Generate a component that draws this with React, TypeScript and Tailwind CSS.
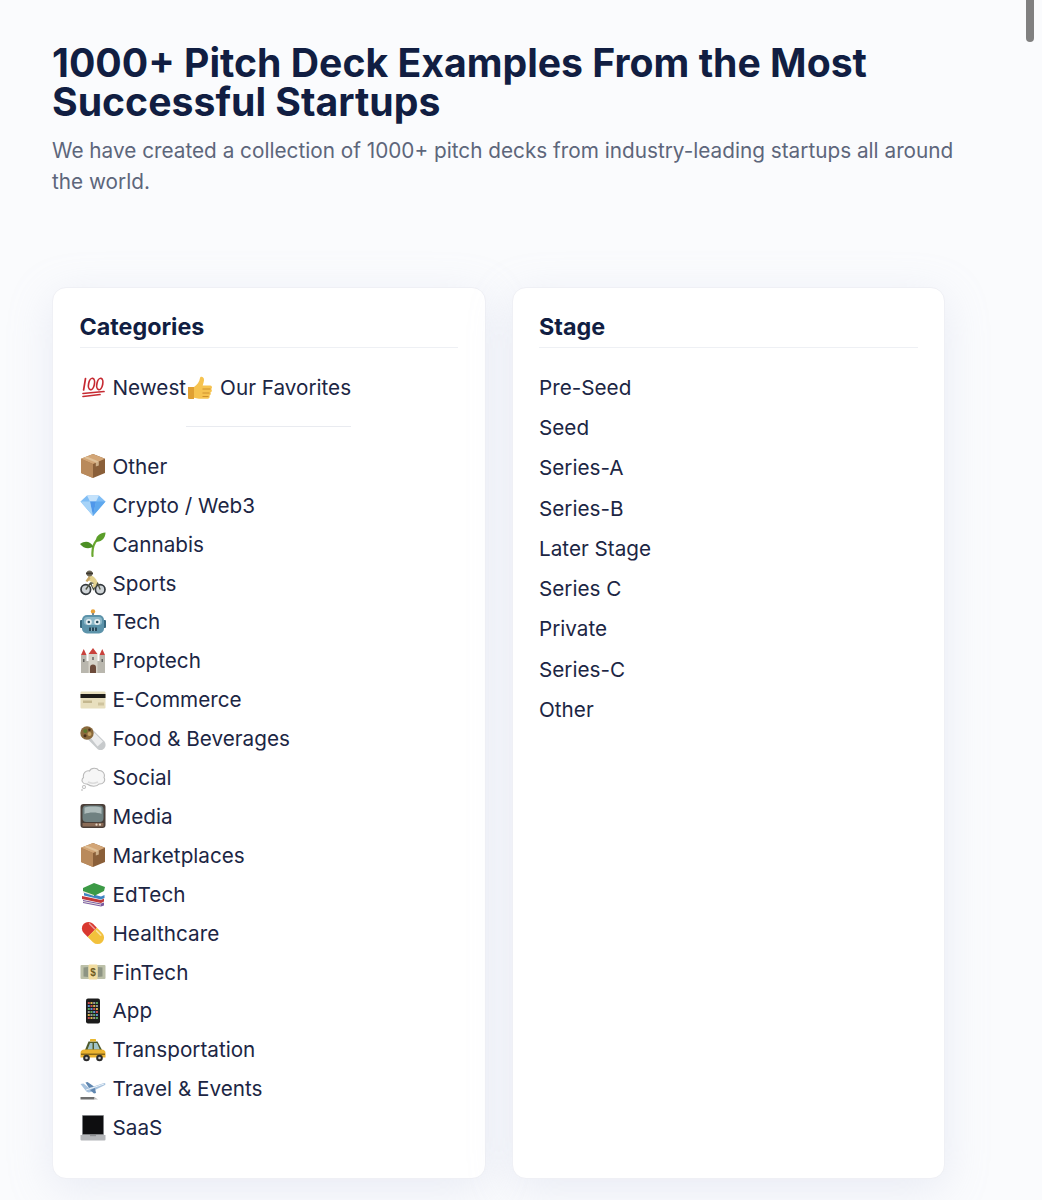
import React from "react";

const S = ({ children }: { children: React.ReactNode }) => (
  <svg viewBox="0 0 26 26" className="w-[26px] h-[26px] shrink-0">{children}</svg>
);

const Hundred = () => (
  <S>
    <g fill="none" stroke="#c62a32" strokeWidth="1.700" strokeLinecap="round">
      <path d="M5.500 3.500 3.600 15" />
      <ellipse cx="11.500" cy="9" rx="2.900" ry="5.800" transform="rotate(12 11.500 9)" />
      <ellipse cx="19.800" cy="9" rx="2.900" ry="5.800" transform="rotate(12 19.800 9)" />
      <path d="M3 18.500 Q13 17.500 24 16.500" />
      <path d="M3 21.500 Q12 20.500 20 19.500" />
    </g>
  </S>
);
const Thumb = () => (
  <S>
    <path d="M1 12h6v12H2a1 1 0 0 1-1-1z" fill="#e0a033" />
    <path d="M7 12c3-2 5.500-5 6-9 .3-2.300 4.500-1.500 4 2.500-.2 1.800-.8 3.500-1.300 5h7.300a2 2 0 0 1 1.200 3.600 2 2 0 0 1-.8 3.400 2 2 0 0 1-1 3.200 2 2 0 0 1-1.700 3H12c-2 0-3.500-1-5-1z" fill="#f6c350" />
    <path d="M15.500 14h8M15.500 18h7M15.500 21.500h6" stroke="#c98a2b" strokeWidth=".9" />
  </S>
);
const Box = () => (
  <S>
    <path d="M13 1 1 5.800V20l12 5z" fill="#a97a4d" />
    <path d="M13 1l12 4.800V20l-12 5z" fill="#8a5f39" />
    <path d="M1 5.800 13 1l12 4.800L13 11z" fill="#d3a677" />
    <path d="M13 11v14L1 20V5.800z" fill="#b98a5c" />
    <path d="M6.800 3.500 18.800 8.500v4l-3 1v-4L4 4.800z" fill="#e4c9a3" opacity=".75" />
  </S>
);
const Gem = () => (
  <S>
    <path d="M.5 9.500 7 3.500h12l6.500 6L13 24z" fill="#7fbdf5" />
    <path d="M7 3.500h12l-3 6H10z" fill="#c4e2fb" />
    <path d="M10 9.500h6L13 24z" fill="#4f97ea" />
    <path d="M.5 9.500H10L13 24z" fill="#a6d3f8" />
    <path d="M16 9.500h9.500L13 24z" fill="#5ea8ee" />
  </S>
);
const Sprout = () => (
  <S>
    <path d="M12.500 25C12 18 13 13 17 9" fill="none" stroke="#6aa82f" strokeWidth="2.200" strokeLinecap="round" />
    <path d="M15.500 10.500C16 4.500 20 2 25.500 1.500c0 5.500-4 10-10 9z" fill="#5b9e2a" />
    <path d="M13.500 15.500C10 10 5 9.500 0 13c3.500 4.500 9 5.500 13.500 2.500z" fill="#4c8f24" />
  </S>
);
const Biker = () => (
  <S>
    <circle cx="5.800" cy="19.500" r="4.800" fill="#cfd4d7" stroke="#33383d" strokeWidth="1.700" />
    <circle cx="20.200" cy="19.500" r="4.800" fill="#cfd4d7" stroke="#33383d" strokeWidth="1.700" />
    <path d="M5.800 19.500 10.500 13h7l2.700 6.500M10.500 13l3 6.500 4-6.500" fill="none" stroke="#4f5340" strokeWidth="1.300" />
    <path d="M9 4.500c3.500.8 7 3.500 8.500 7.500l-2.500 5.500-2.500-.8 1.200-3.800L7.500 10z" fill="#e3d28f" />
    <path d="M9 6l-3.500 5 2 1 3-3.500z" fill="#c9a865" />
    <circle cx="9.500" cy="3.500" r="3" fill="#6f6a5a" />
    <path d="M6 2.500h7v1.800H6z" fill="#3f3a30" />
  </S>
);
const Robot = () => (
  <S>
    <circle cx="13" cy="2.500" r="2.200" fill="#e8a33a" />
    <path d="M12 4h2v3h-2z" fill="#7c8a92" />
    <rect x="0" y="11" width="3.500" height="8" rx="1" fill="#37687e" />
    <rect x="22.500" y="11" width="3.500" height="8" rx="1" fill="#37687e" />
    <rect x="2" y="6" width="22" height="18.500" rx="5" fill="#5c93aa" />
    <rect x="4" y="8" width="18" height="8" rx="3" fill="#8db8c8" />
    <circle cx="8.800" cy="13" r="3" fill="#e6eef1" />
    <circle cx="17.200" cy="13" r="3" fill="#e6eef1" />
    <circle cx="8.800" cy="13" r="1.300" fill="#234a5c" />
    <circle cx="17.200" cy="13" r="1.300" fill="#234a5c" />
    <path d="M9 18.500h8v3.500H9z" fill="#27485a" />
    <path d="M11.500 18.500v3.500M14.500 18.500v3.500" stroke="#9fc0cd" strokeWidth=".8" />
  </S>
);
const Castle = () => (
  <S>
    <path d="M1 25V7h5.500v18zM19.500 25V7H25v18zM6 25V13h14v12z" fill="#b9b7ae" />
    <path d="M8.500 25V6h9v19z" fill="#d6d3c9" />
    <path d="M1 7l2.750-6L6.500 7zM19.500 7l2.750-6L25 7zM8.500 6 13 0l4.500 6z" fill="#c9423c" />
    <path d="M10 25v-5.500a3 3 0 0 1 6 0V25z" fill="#6c4a3a" />
    <path d="M3.200 11h1.200v3H3.200zM21.600 11h1.200v3h-1.200zM12.400 9h1.200v3h-1.200z" fill="#4d4d4d" />
  </S>
);
const Card = () => (
  <S>
    <rect x="0.500" y="4.500" width="25" height="17" rx="1" fill="#e8dfbe" />
    <rect x="0.500" y="7" width="25" height="4" fill="#1d1b18" />
    <rect x="3" y="13.500" width="9" height="2.500" fill="#c4b78f" />
    <rect x="18" y="15.500" width="6" height="3" fill="#cfc49e" />
  </S>
);
const Burrito = () => (
  <S>
    <path d="M4 9.500 11 2l13.500 13.500c2.500 3 .5 8.500-4 8.500-1.500 0-2.500-.5-3.500-1.500z" fill="#c7cacc" />
    <path d="M8 8.500 12 4.500l11 11-5.500 5z" fill="#ecedee" />
    <circle cx="7" cy="7" r="6.700" fill="#8a6a3d" />
    <circle cx="5.300" cy="5" r="2" fill="#5f7a2e" />
    <circle cx="9.500" cy="8" r="2" fill="#c8a465" />
    <circle cx="5" cy="9.800" r="1.500" fill="#4a3018" />
    <circle cx="9.500" cy="3.800" r="1.300" fill="#4a3018" />
  </S>
);
const Bubble = () => (
  <S>
    <path d="M7 19c-4.500.5-6.500-4-3.500-6.500C2.500 8 6.500 5 9.500 6 11 2.500 17 2.500 18.800 5.500 22.500 5 25.500 9 24 12.500c2 3.500-1 7-5 6.500-2 3-8 3-12 0z" fill="#f6f6f6" stroke="#b9b9b9" strokeWidth="1.100" />
    <path d="M8 17c3 1.500 7 1.500 10 0" fill="none" stroke="#dcdcdc" strokeWidth="1.500" />
    <circle cx="4" cy="22" r="1.700" fill="#f0f0f0" stroke="#b9b9b9" strokeWidth=".8" />
    <circle cx="2" cy="25" r="1" fill="#cfcfcf" />
  </S>
);
const Tv = () => (
  <S>
    <rect x="0.500" y="1" width="25" height="24" rx="3" fill="#4a3f38" />
    <rect x="2.500" y="2.500" width="21" height="16.500" rx="4" fill="#6f8181" />
    <path d="M4.500 4.500c3-1.500 14-1.500 17 0v6.500c-4-2-13-2-17 0z" fill="#aebcbb" />
    <rect x="2.500" y="20" width="21" height="3.500" fill="#8b6c57" />
    <circle cx="20" cy="21.700" r="1.100" fill="#e6d9c9" />
    <circle cx="16.500" cy="21.700" r="1.100" fill="#e6d9c9" />
  </S>
);
const Books = () => (
  <S>
    <path d="M3 19l18 3.500 3-1v3l-3 1L3 22z" fill="#7a5aa0" />
    <path d="M3 20 21 23.500v1L3 21z" fill="#e9e7df" />
    <path d="M2 15l19 4 3-1.500v3L21 22 2 18z" fill="#c23a3a" />
    <path d="M4 11l17 4.500 3.500-1.500v3L21 18.500 4 14.500z" fill="#3e84c2" />
    <path d="M3 7 14 2l11 4-1 4-10 5L3 11z" fill="#3c9a46" />
    <path d="M3 10l11 4v1L3 11.500z" fill="#eee9dd" />
  </S>
);
const Pill = () => (
  <S>
    <g transform="rotate(45 13 13)">
      <path d="M12 6.500H6.500a6.500 6.500 0 0 0 0 13H12z" fill="#d9382f" />
      <path d="M12 6.500h7.500a6.500 6.500 0 0 1 0 13H12z" fill="#f2c13c" />
      <path d="M4 9h7M14 9h6" stroke="#fff" strokeOpacity=".5" strokeWidth="1.500" strokeLinecap="round" />
    </g>
  </S>
);
const Money = () => (
  <S>
    <rect x="0.500" y="6" width="25" height="14" rx="1" fill="#bcc0a8" />
    <path d="M3.500 8.500 8 8v10l-4.500-.5zM22.500 8.500 18 8v10l4.500-.5z" fill="#8d9483" />
    <rect x="8.500" y="5.500" width="9" height="15" rx="1" fill="#f0dca0" />
    <text x="13" y="17" textAnchor="middle" fontSize="10" fontWeight="700" fill="#6d5a22" fontFamily="Liberation Sans, sans-serif">$</text>
  </S>
);
const Phone = () => (
  <S>
    <rect x="6" y="0.500" width="14" height="25" rx="2" fill="#1c1c1c" />
    {[0, 1, 2, 3, 4, 5].map((r) =>
      [0, 1, 2, 3].map((c) => (
        <rect
          key={`${r}${c}`}
          x={7.800 + c * 2.700}
          y={4 + r * 3}
          width="2"
          height="2"
          fill={["#c94f4f", "#5fa85f", "#d9b44a", "#5f8fd0", "#999"][(r * 3 + c * 2) % 5]}
        />
      ))
    )}
  </S>
);
const Taxi = () => (
  <S>
    <path d="M5 13 8.500 4.500h9L22 13z" fill="#4e5a2c" />
    <path d="M7.500 12.500 10 6h2.500v6.500zM14 6h3l2.800 6.500H14z" fill="#9fc3c9" />
    <rect x="10" y="2" width="6" height="2.500" rx=".5" fill="#e9b830" />
    <path d="M.5 20.500V16c0-2 1.500-3.500 4-3.500h17c2.500 0 4 1.500 4 3.500v4.500z" fill="#ecb32e" />
    <path d="M1 16.500h24V18H1z" fill="#8c6a1a" />
    <circle cx="6.500" cy="21" r="3.300" fill="#2b2b2b" />
    <circle cx="19.500" cy="21" r="3.300" fill="#2b2b2b" />
    <circle cx="6.500" cy="21" r="1.300" fill="#c9c9c9" />
    <circle cx="19.500" cy="21" r="1.300" fill="#c9c9c9" />
  </S>
);
const Plane = () => (
  <S>
    <path d="M.5 8l3-.5 5.500 4.500 15-5c1.500 0 2 1 1 2L11 16c-2 .8-4 .5-5-1z" fill="#a8c3de" />
    <path d="M9 12 5.500 6.500l2-.5 6.500 4.500zM10 14l4 3.500 2-.5-1-5z" fill="#5f86b0" />
    <path d="M6 14l18-6" stroke="#e9f0f7" strokeWidth="1" />
    <rect x="0.500" y="21" width="14" height="2.500" fill="#6f6f6f" />
    <path d="M14.500 23.500h3.500l-3.500-2.500z" fill="#bdbdbd" />
  </S>
);
const Laptop = () => (
  <S>
    <rect x="2" y="0" width="22" height="20" rx="1" fill="#7d7f82" />
    <rect x="3" y="1" width="20" height="18" fill="#0e0e10" />
    <path d="M.5 20h25v4.500a1 1 0 0 1-1 1h-23a1 1 0 0 1-1-1z" fill="#b4b6b9" />
    <rect x="10" y="20" width="6" height="1.200" fill="#8c8e91" />
  </S>
);

const categories: [React.FC, string][] = [
  [Box, "Other"],
  [Gem, "Crypto / Web3"],
  [Sprout, "Cannabis"],
  [Biker, "Sports"],
  [Robot, "Tech"],
  [Castle, "Proptech"],
  [Card, "E-Commerce"],
  [Burrito, "Food & Beverages"],
  [Bubble, "Social"],
  [Tv, "Media"],
  [Box, "Marketplaces"],
  [Books, "EdTech"],
  [Pill, "Healthcare"],
  [Money, "FinTech"],
  [Phone, "App"],
  [Taxi, "Transportation"],
  [Plane, "Travel & Events"],
  [Laptop, "SaaS"],
];

const stages = ["Pre-Seed", "Seed", "Series-A", "Series-B", "Later Stage", "Series C", "Private", "Series-C", "Other"];

const cardClass =
  "w-[433.500px] h-[891.500px] bg-white rounded-[14px] border border-[#eff0f5] shadow-[0_10px_44px_rgba(185,193,222,0.26)] px-[26.500px] pt-[20px]";

function Heading({ children }: { children: React.ReactNode }) {
  return (
    <h2 className="text-[23.300px] leading-[37px] font-bold text-[#111e42] border-b-[1.500px] border-[#eef0f4] pb-[2px]">
      {children}
    </h2>
  );
}

export default function App() {
  return (
    <div className="relative h-[1200px] overflow-hidden bg-[#fafbfd] pl-[52px] pt-[43px] font-['Inter',sans-serif]">
      <div className="absolute right-[8px] top-0 w-[8px] h-[42px] rounded-b-full bg-[#808080]" />
      <h1 className="text-[39.200px] leading-[39px] font-bold text-[#111e42] w-[900px]">
        1000+ Pitch Deck Examples From the Most Successful Startups
      </h1>
      <p className="mt-[14px] w-[920px] text-[20.750px] leading-[31px] text-[#5d667b]">
        We have created a collection of 1000+ pitch decks from industry-leading startups all around the world.
      </p>
      <div className="mt-[90px] flex gap-[26px]">
        <div className={cardClass}>
          <Heading>Categories</Heading>
          <div className="mt-[20px] flex items-center h-[39px] text-[20.700px] text-[#1c2644]">
            <Hundred />
            <span className="ml-[7px]">Newest</span>
            <span className="ml-[1px]">
              <Thumb />
            </span>
            <span className="ml-[7px]">Our Favorites</span>
          </div>
          <div className="mx-auto mt-[19px] mb-[20px] h-px w-[165px] bg-[#e9ebf0]" />
          <ul>
            {categories.map(([Icon, label]) => (
              <li key={label} className="flex items-center h-[38.900px] gap-[7px] text-[20.700px] text-[#1c2644]">
                <Icon />
                <span>{label}</span>
              </li>
            ))}
          </ul>
        </div>
        <div className={cardClass}>
          <Heading>Stage</Heading>
          <ul className="mt-[19px]">
            {stages.map((s, i) => (
              <li key={i} className="flex items-center h-[40.300px] text-[20.700px] text-[#1c2644]">
                {s}
              </li>
            ))}
          </ul>
        </div>
      </div>
    </div>
  );
}
